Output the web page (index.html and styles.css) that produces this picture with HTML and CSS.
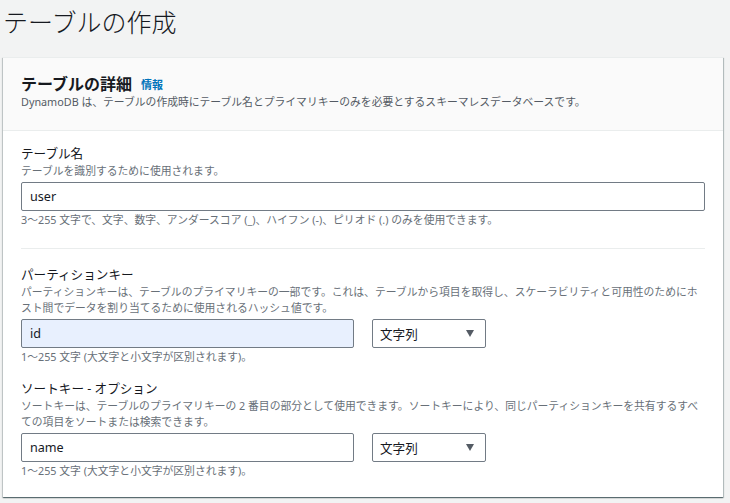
FILE: index.html
```html
<!DOCTYPE html>
<html lang="ja">
<head>
<meta charset="utf-8">
<title>テーブルの作成</title>
<link rel="stylesheet" href="styles.css">
</head>
<body>
<div class="page">
  <h1 class="page-title">テーブルの作成</h1>
  <section class="card">
    <header class="card-header">
      <div class="card-heading">
        <h2 class="card-title">テーブルの詳細</h2>
        <a class="info-link" href="#">情報</a>
      </div>
      <p class="card-desc">DynamoDB は、テーブルの作成時にテーブル名とプライマリキーのみを必要とするスキーマレスデータベースです。</p>
    </header>
    <div class="card-body">
      <div class="field">
        <div class="field-label">テーブル名</div>
        <div class="field-desc">テーブルを識別するために使用されます。</div>
        <div class="control-row">
          <div class="input input-full">user</div>
        </div>
        <div class="field-constraint">3～255 文字で、文字、数字、アンダースコア (_)、ハイフン (-)、ピリオド (.) のみを使用できます。</div>
      </div>
      <div class="divider"></div>
      <div class="keys">
        <div class="field">
          <div class="field-label">パーティションキー</div>
          <div class="field-desc">パーティションキーは、テーブルのプライマリキーの一部です。これは、テーブルから項目を取得し、スケーラビリティと可用性のためにホ<br>スト間でデータを割り当てるために使用されるハッシュ値です。</div>
          <div class="control-row">
            <div class="input input-key input-autofill">id</div>
            <div class="select"><span>文字列</span><span class="caret"></span></div>
          </div>
          <div class="field-constraint">1～255 文字 (大文字と小文字が区別されます)。</div>
        </div>
        <div class="field">
          <div class="field-label">ソートキー - オプション</div>
          <div class="field-desc">ソートキーは、テーブルのプライマリキーの 2 番目の部分として使用できます。ソートキーにより、同じパーティションキーを共有するすべ<br>ての項目をソートまたは検索できます。</div>
          <div class="control-row">
            <div class="input input-key">name</div>
            <div class="select"><span>文字列</span><span class="caret"></span></div>
          </div>
          <div class="field-constraint">1～255 文字 (大文字と小文字が区別されます)。</div>
        </div>
      </div>
    </div>
  </section>
</div>
</body>
</html>
```

FILE: styles.css
```css
html, body {
  margin: 0;
  padding: 0;
  background: #f2f3f3;
}

body {
  font-family: "Noto Sans", "Noto Sans CJK JP", sans-serif;
  color: #16191f;
  width: 730px;
  height: 503px;
  overflow: hidden;
}

.page {
  padding: 6px 7px 0 3px;
}

.page-title {
  margin: 0 0 21px 0;
  font-size: 25px;
  line-height: 30px;
  font-weight: 300;
  color: #16191f;
  font-family: "Noto Sans CJK JP", sans-serif;
}

.card {
  background: #ffffff;
  box-shadow: 0 1px 1px 0 rgba(0, 28, 36, 0.45), 1px 1px 1px 0 rgba(0, 28, 36, 0.2), -1px 1px 1px 0 rgba(0, 28, 36, 0.15);
  border-top: 1px solid #eaeded;
}

.card-header {
  background: #fafafa;
  border-bottom: 1px solid #eaeded;
  padding: 15px 18px 20px 18px;
}

.card-heading {
  display: flex;
  align-items: center;
  gap: 9px;
  height: 20px;
}

.card-title {
  margin: 0;
  font-size: 16px;
  line-height: 20px;
  font-weight: 700;
  font-family: "Noto Sans CJK JP", sans-serif;
}

.info-link {
  font-size: 11px;
  line-height: 14px;
  font-weight: 700;
  color: #0073bb;
  text-decoration: none;
  font-family: "Noto Sans CJK JP", sans-serif;
  padding-top: 2px;
}

.card-desc {
  margin: 1px 0 0 0;
  font-size: 10.8px;
  line-height: 16px;
  color: #545b64;
}

.card-body {
  padding: 14px 18px 18px 18px;
}

.field-label {
  font-size: 12.6px;
  line-height: 18px;
  color: #16191f;
}

.field-desc {
  font-size: 10.8px;
  line-height: 16px;
  color: #687078;
}

.control-row {
  display: flex;
  gap: 18px;
  margin-top: 3px;
}

.input {
  box-sizing: border-box;
  height: 29px;
  border: 1px solid #727b85;
  border-radius: 2px;
  background: #ffffff;
  padding: 0 8px;
  font-size: 12.6px;
  line-height: 27px;
  color: #16191f;
}

.input-full {
  flex: 1;
}

.input-key {
  width: 333px;
}

.input-autofill {
  background: #e8f0fe;
}

.select {
  box-sizing: border-box;
  width: 114px;
  height: 29px;
  border: 1px solid #727b85;
  border-radius: 2px;
  background: #ffffff;
  padding: 0 11px 0 7px;
  display: flex;
  align-items: center;
  justify-content: space-between;
  font-size: 12.6px;
  color: #16191f;
  font-family: "Noto Sans CJK JP", sans-serif;
}

.caret {
  width: 0;
  height: 0;
  border-left: 4.5px solid transparent;
  border-right: 4.5px solid transparent;
  border-top: 7px solid #545b64;
}

.field-constraint {
  margin-top: 1px;
  font-size: 10.8px;
  line-height: 16px;
  color: #687078;
}

.divider {
  height: 1px;
  background: #eaeded;
  margin: 20px 0 17px 0;
}

.keys {
  display: flex;
  flex-direction: column;
  gap: 15px;
}
```
